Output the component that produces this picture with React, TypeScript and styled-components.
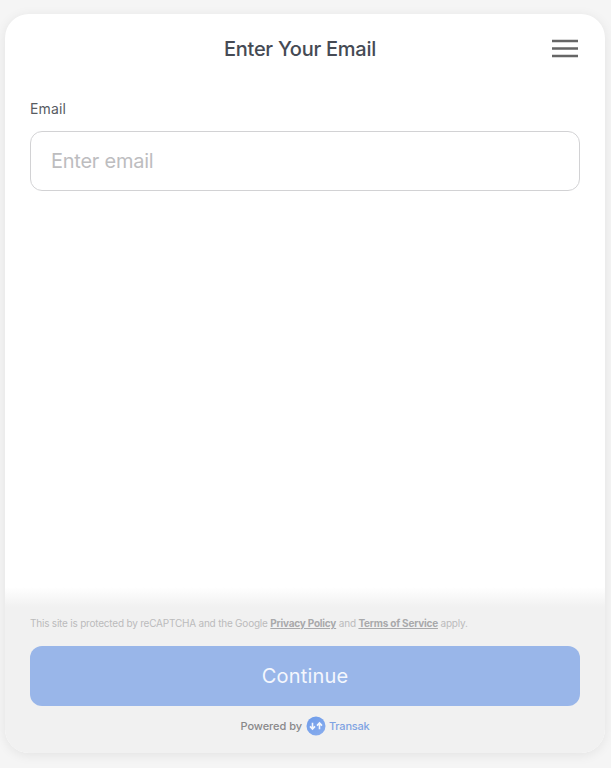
import React from "react";
import styled, { createGlobalStyle } from "styled-components";

const Global = createGlobalStyle`
  html, body { margin: 0; padding: 0; height: 100%; background: #f5f5f5; }
  body { font-family: Inter, "Noto Sans", sans-serif; overflow: hidden; }
  #root { height: 100%; }
`;

const Page = styled.div`
  box-sizing: border-box;
  height: 768px;
  padding: 14px 6px 15px 5px;
  display: flex;
`;

const Card = styled.main`
  flex: 1;
  display: flex;
  flex-direction: column;
  border-radius: 24px;
  background: #fff;
  box-shadow: 0 2px 12px rgba(0, 0, 0, 0.08);
  overflow: hidden;
`;

const Header = styled.header`
  height: 70px;
  box-sizing: border-box;
  padding: 0 27px 0 0;
  display: flex;
  align-items: center;
`;

const Title = styled.h1`
  flex: 1;
  margin: 0;
  padding-left: 43px;
  text-align: center;
  font-size: 20px;
  line-height: 28px;
  font-weight: 500;
  letter-spacing: -0.25px;
  color: #454a54;
`;

const MenuButton = styled.button`
  width: 26px;
  height: 20px;
  padding: 0;
  border: 0;
  background: none;
  display: flex;
`;

const Body = styled.section`
  flex: 1;
  padding: 15px 25px 0;
`;

const Label = styled.label`
  display: block;
  font-size: 14px;
  line-height: 20px;
  letter-spacing: 0.15px;
  color: #585c62;
  margin-bottom: 12px;
`;

const Input = styled.input`
  display: block;
  box-sizing: border-box;
  width: 100%;
  height: 60px;
  padding: 0 20px;
  border: 1px solid #d2d2d4;
  border-radius: 12px;
  outline: none;
  font: 400 20px Inter, "Noto Sans", sans-serif;
  letter-spacing: -0.25px;
  background: #fff;
  &::placeholder { color: #bdbdbf; opacity: 1; }
`;

const Footer = styled.footer`
  position: relative;
  background: #f1f1f1;
  padding: 12px 25px 0;
  height: 150px;
  box-sizing: border-box;
  &::before {
    content: "";
    position: absolute;
    left: 0;
    right: 0;
    bottom: calc(100% - 4px);
    height: 20px;
    background: linear-gradient(to bottom, #ffffff, #f1f1f1);
  }
`;

const Notice = styled.p`
  position: relative;
  margin: 0 0 15px;
  font-size: 10px;
  line-height: 16px;
  letter-spacing: -0.21px;
  white-space: nowrap;
  color: #bbbbbc;
`;

const NoticeLink = styled.a`
  font-weight: 700;
  color: #a9a9ab;
  text-decoration: underline;
`;

const Continue = styled.button`
  display: block;
  width: 100%;
  height: 60px;
  border: 0;
  border-radius: 12px;
  background: #99b6e9;
  color: #f4f7fd;
  font: 400 20px Inter, "Noto Sans", sans-serif;
  letter-spacing: 0.2px;
`;

const Powered = styled.div`
  margin-top: 10px;
  display: flex;
  justify-content: center;
  align-items: center;
  gap: 4px;
  font-size: 11px;
  line-height: 20px;
  font-weight: 500;
  letter-spacing: -0.05px;
  color: #88888a;
`;

const Brand = styled.span`
  color: #7fa3e3;
  letter-spacing: -0.2px;
  margin-left: -1px;
`;

const Logo = () => (
  <svg width="20" height="20" viewBox="0 0 20 20" aria-hidden="true">
    <defs>
      <linearGradient id="lg" x1="0" y1="0" x2="0.6" y2="1">
        <stop offset="0" stopColor="#6d9bea" />
        <stop offset="1" stopColor="#86abed" />
      </linearGradient>
    </defs>
    <circle cx="10" cy="10" r="9.5" fill="url(#lg)" />
    <path
      d="M6.5 6.8 V13 M4 10.4 L6.5 13 L9 10.4 M13.5 13.2 V7 M11 9.6 L13.5 7 L16 9.6"
      fill="none"
      stroke="#f2f6fd"
      strokeWidth="1.6"
    />
  </svg>
);

const Menu = () => (
  <svg width="26" height="20" viewBox="0 0 26 20" aria-hidden="true">
    <path d="M0 2h26M0 9.5h26M0 17h26" stroke="#666666" strokeWidth="2.4" />
  </svg>
);

export default function App() {
  return (
    <>
      <Global />
      <Page>
        <Card>
          <Header>
            <Title>Enter Your Email</Title>
            <MenuButton aria-label="Menu"><Menu /></MenuButton>
          </Header>
          <Body>
            <Label htmlFor="email">Email</Label>
            <Input id="email" placeholder="Enter email" />
          </Body>
          <Footer>
            <Notice>
              This site is protected by reCAPTCHA and the Google <NoticeLink>Privacy Policy</NoticeLink> and <NoticeLink>Terms of Service</NoticeLink> apply.
            </Notice>
            <Continue>Continue</Continue>
            <Powered>
              Powered by <Logo /> <Brand>Transak</Brand>
            </Powered>
          </Footer>
        </Card>
      </Page>
    </>
  );
}
